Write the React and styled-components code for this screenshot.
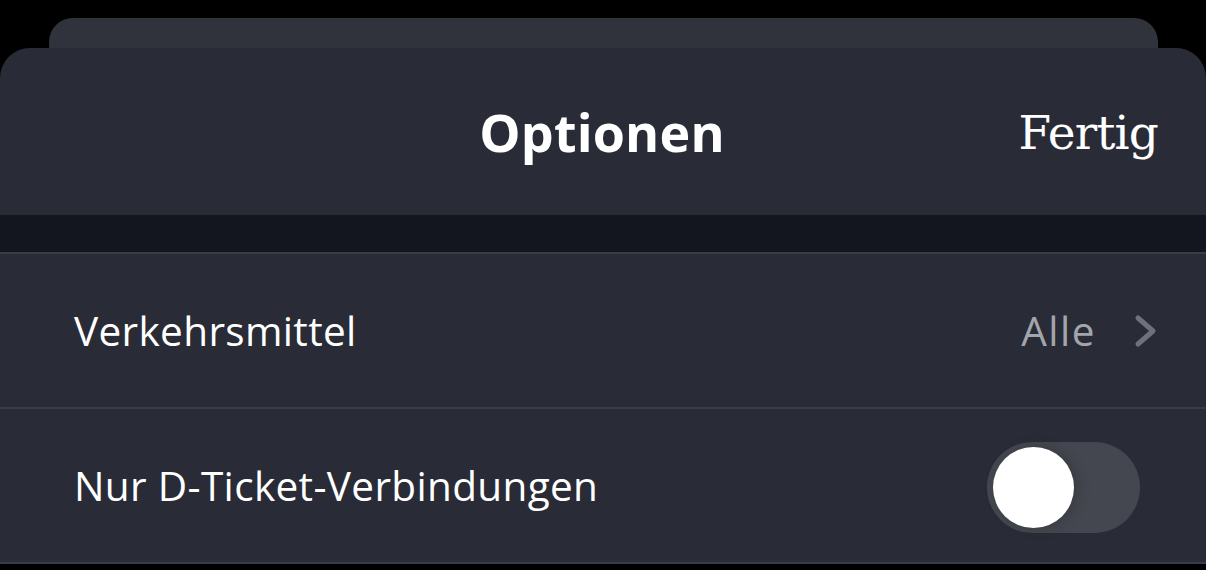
import React, { useState } from "react";
import styled, { createGlobalStyle } from "styled-components";

const GlobalStyle = createGlobalStyle`
  html, body {
    margin: 0;
    padding: 0;
    background: #000;
  }
  body {
    font-family: "Open Sans", "Noto Sans", sans-serif;
    -webkit-font-smoothing: antialiased;
  }
`;

const Page = styled.div`
  width: 1206px;
  height: 570px;
  overflow: hidden;
  background: #000;
  padding-top: 18px;
  box-sizing: border-box;
`;

const BackCard = styled.div`
  height: 30px;
  margin: 0 48px 0 49px;
  background: #30333b;
  border-radius: 24px 24px 0 0;
`;

const Sheet = styled.div`
  background: #292c36;
  border-radius: 30px 30px 0 0;
`;

const Header = styled.div`
  position: relative;
  height: 167px;
  display: flex;
  align-items: center;
  justify-content: center;
  color: #fff;
`;

const Title = styled.h1`
  margin: 0;
  font-size: 52px;
  font-weight: 700;
  letter-spacing: 0.2px;
  transform: translateX(-1px);
`;

const DoneButton = styled.button`
  position: absolute;
  right: 48px;
  top: 50%;
  transform: translateY(-50%);
  background: none;
  border: none;
  padding: 0;
  color: #fff;
  font-family: "DejaVu Serif", "Liberation Serif", serif;
  font-size: 47px;
  letter-spacing: -0.8px;
  cursor: pointer;
`;

const Band = styled.div`
  height: 37px;
  background: #13161e;
  border-bottom: 2px solid #3a3d47;
`;

const Row = styled.div`
  height: 153px;
  display: flex;
  align-items: center;
  justify-content: space-between;
  padding: 0 ${(p) => p.$right}px 0 74px;
  border-bottom: 2px solid #3a3d47;
  color: #fff;
  font-size: 40.5px;
`;

const Label = styled.span`
  letter-spacing: 0.35px;
`;

const Trailing = styled.div`
  display: flex;
  align-items: center;
  gap: 38px;
`;

const Value = styled.span`
  color: #a2a5ac;
  letter-spacing: 1.5px;
`;

const Track = styled.button`
  position: relative;
  width: 153px;
  height: 91px;
  margin-top: 4px;
  border: none;
  padding: 0;
  border-radius: 46px;
  background: #44474f;
  cursor: pointer;
`;

const Knob = styled.span`
  position: absolute;
  top: 5px;
  left: 6px;
  width: 81px;
  height: 81px;
  border-radius: 50%;
  background: #fff;
  box-shadow: 4px 0 14px rgba(0, 0, 0, 0.18);
`;

function Chevron() {
  return (
    <svg width="24" height="34" viewBox="0 0 24 34">
      <path
        d="M4 4 L19 17 L4 30"
        fill="none"
        stroke="#6e717a"
        strokeWidth="5"
        strokeLinecap="round"
        strokeLinejoin="round"
      />
    </svg>
  );
}

export default function App() {
  const [dTicket, setDTicket] = useState(false);
  return (
    <>
      <GlobalStyle />
      <Page>
        <BackCard />
        <Sheet>
          <Header>
            <Title>Optionen</Title>
            <DoneButton>Fertig</DoneButton>
          </Header>
          <Band />
          <Row $right={48}>
            <Label>Verkehrsmittel</Label>
            <Trailing>
              <Value>Alle</Value>
              <Chevron />
            </Trailing>
          </Row>
          <Row $right={66}>
            <Label>Nur D-Ticket-Verbindungen</Label>
            <Track onClick={() => setDTicket(!dTicket)}>
              <Knob />
            </Track>
          </Row>
        </Sheet>
      </Page>
    </>
  );
}
